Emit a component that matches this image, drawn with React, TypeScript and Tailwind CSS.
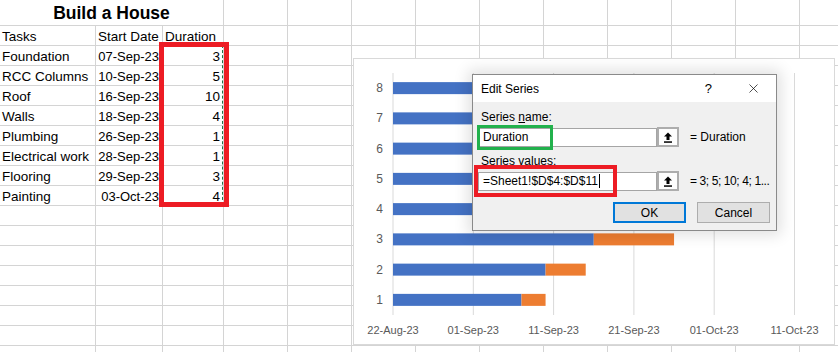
import { X } from "lucide-react";

const TASKS = [
  { name: "Foundation", start: "07-Sep-23", day: 16, dur: 3 },
  { name: "RCC Columns", start: "10-Sep-23", day: 19, dur: 5 },
  { name: "Roof", start: "16-Sep-23", day: 25, dur: 10 },
  { name: "Walls", start: "18-Sep-23", day: 27, dur: 4 },
  { name: "Plumbing", start: "26-Sep-23", day: 35, dur: 1 },
  { name: "Electrical work", start: "28-Sep-23", day: 37, dur: 1 },
  { name: "Flooring", start: "29-Sep-23", day: 38, dur: 3 },
  { name: "Painting", start: "03-Oct-23", day: 42, dur: 4 },
];

const EXTRA_COLS = 10;
const EMPTY_ROWS = 8;

const FONT = "font-['Liberation_Sans',Arial,sans-serif]";

function Cell({ w, children, align = "left" }: { w: string; children?: React.ReactNode; align?: "left" | "right" }) {
  return (
    <div
      className={`${w} h-[20px] shrink-0 overflow-visible whitespace-nowrap border-r border-b border-[#d4d4d4] pt-[1px] text-[13.5px] leading-[19px] text-black ${
        align === "right" ? "pr-[3px] text-right" : "pl-[2px]"
      }`}
    >
      {children}
    </div>
  );
}

function Fillers() {
  return (
    <>
      {Array.from({ length: EXTRA_COLS }).map((_, i) => (
        <Cell key={i} w="w-[64px]" />
      ))}
    </>
  );
}

function Sheet() {
  return (
    <div className="flex flex-col">
      <div className="flex">
        <div className="flex h-[26px] w-[224px] shrink-0 items-center justify-center border-r border-b border-[#d4d4d4] text-[17.5px] font-bold leading-[26px]">
          Build a House
        </div>
        {Array.from({ length: EXTRA_COLS + 1 }).map((_, i) => (
          <div key={i} className="h-[26px] w-[64px] shrink-0 border-r border-b border-[#d4d4d4]" />
        ))}
      </div>
      <div className="flex">
        <Cell w="w-[96px]">Tasks</Cell>
        <Cell w="w-[67px]">Start Date</Cell>
        <Cell w="w-[61px]">Duration</Cell>
        <Cell w="w-[64px]" />
        <Fillers />
      </div>
      {TASKS.map((t) => (
        <div key={t.name} className="flex">
          <Cell w="w-[96px]">{t.name}</Cell>
          <Cell w="w-[67px]" align="right">
            <span className="text-[13px]">{t.start}</span>
          </Cell>
          <Cell w="w-[61px]" align="right">
            {t.dur}
          </Cell>
          <Cell w="w-[64px]" />
          <Fillers />
        </div>
      ))}
      {Array.from({ length: EMPTY_ROWS }).map((_, r) => (
        <div key={r} className="flex">
          <Cell w="w-[96px]" />
          <Cell w="w-[67px]" />
          <Cell w="w-[61px]" />
          <Cell w="w-[64px]" />
          <Fillers />
        </div>
      ))}
    </div>
  );
}

const DAY = 8.03;
const X0 = 39;
const TOP = 14;
const BAND = 30.25;
const DATES = ["22-Aug-23", "01-Sep-23", "11-Sep-23", "21-Sep-23", "01-Oct-23", "11-Oct-23"];

function Chart() {
  return (
    <div className="absolute left-[353px] top-[58px] h-[287px] w-[482px] border border-[#d9d9d9] bg-white">
      <svg width="480" height="285" className="block">
        {DATES.map((d, i) => {
          const x = X0 + i * 10 * DAY;
          return (
            <g key={d}>
              <line x1={x} x2={x} y1={TOP} y2={256} stroke="#d9d9d9" strokeWidth="1" />
              <text x={x} y={275} textAnchor="middle" fontSize="11" fill="#595959" fontFamily="Liberation Sans, Arial, sans-serif">
                {d}
              </text>
            </g>
          );
        })}
        {TASKS.map((t, i) => {
          const cy = TOP + BAND * (7 - i + 0.5);
          return (
            <g key={t.name}>
              <text x={29} y={cy + 4} textAnchor="end" fontSize="12" fill="#595959" fontFamily="Liberation Sans, Arial, sans-serif">
                {i + 1}
              </text>
              <rect x={X0} y={cy - 6} width={t.day * DAY} height={12} fill="#4472c4" />
              <rect x={X0 + t.day * DAY} y={cy - 6} width={t.dur * DAY} height={12} fill="#ed7d31" />
            </g>
          );
        })}
      </svg>
    </div>
  );
}

function RefIcon() {
  return (
    <svg width="10" height="11" viewBox="0 0 10 11">
      <path d="M5 0.5 L9 4.5 L6.5 4.5 L6.5 8 L3.5 8 L3.5 4.5 L1 4.5 Z" fill="#000" />
      <rect x="1" y="9.3" width="8" height="1.5" fill="#000" />
    </svg>
  );
}

function Field({ value, caret }: { value: string; caret?: boolean }) {
  return (
    <div className="flex items-center">
      <div className="flex h-[19px] w-[179px] items-center border border-[#a5a5a5] bg-white pl-[4px] text-[12px] text-black">
        <span>{value}</span>
        {caret && <span className="ml-[1px] inline-block h-[14px] w-px bg-black" />}
      </div>
      <div className="flex h-[20px] w-[22px] items-center justify-center border-2 border-[#adadad] bg-[#fdfdfd]">
        <RefIcon />
      </div>
    </div>
  );
}

function Dialog() {
  return (
    <div className="absolute left-[472px] top-[74px] flex h-[157px] w-[305px] flex-col border border-[#8a8a8a] bg-[#f0f0f0] text-[12px] text-black shadow-[0_0_14px_4px_rgba(0,0,0,0.12)]">
      <div className="flex h-[29px] items-center bg-white pl-[8px] pr-[15px]">
        <span>Edit Series</span>
        <span className="ml-auto text-[13px]">?</span>
        <X size={15} strokeWidth={1.1} className="ml-[34px] text-black" />
      </div>
      <div className="flex flex-col px-[5px] pb-[7px]">
        <div className="mt-[7px] pl-[3px] leading-[16px]">
          Series <span className="underline">n</span>ame:
        </div>
        <div className="mt-[2px] flex items-center">
          <Field value="Duration" />
          <span className="ml-[11px]">= Duration</span>
        </div>
        <div className="mt-[6px] pl-[3px] leading-[16px]">
          Series <span className="underline">v</span>alues:
        </div>
        <div className="mt-[2px] flex items-center">
          <Field value="=Sheet1!$D$4:$D$11" caret />
          <span className="ml-[11px] tracking-[-0.4px] whitespace-nowrap">= 3; 5; 10; 4; 1...</span>
        </div>
        <div className="mt-[11px] flex justify-end gap-[11px] pr-[1px]">
          <button className="h-[21px] w-[73px] border-2 border-[#0078d7] bg-[#e1e1e1] text-[12px] leading-none">OK</button>
          <button className="h-[21px] w-[73px] border border-[#adadad] bg-[#e1e1e1] text-[12px] leading-none">Cancel</button>
        </div>
      </div>
      {/* callout boxes drawn over the dialog */}
      <div className="absolute left-[4px] top-[50px] h-[25px] w-[76px] border-[3px] border-[#22b14c]" />
      <div className="absolute left-[1px] top-[90px] h-[32px] w-[143px] border-[4px] border-[#ed1c24]" />
    </div>
  );
}

export default function App() {
  return (
    <div className={`relative h-[352px] w-[838px] overflow-hidden bg-white ${FONT}`}>
      <Sheet />
      {/* copy selection marquee + red highlight on the Duration column */}
      <div className="absolute left-[163px] top-[45px] h-[160px] w-[60px] border border-dashed border-[#217346]" />
      <div className="absolute left-[159px] top-[42px] h-[165px] w-[70px] border-[5px] border-[#ed1c24]" />
      <Chart />
      <Dialog />
    </div>
  );
}
